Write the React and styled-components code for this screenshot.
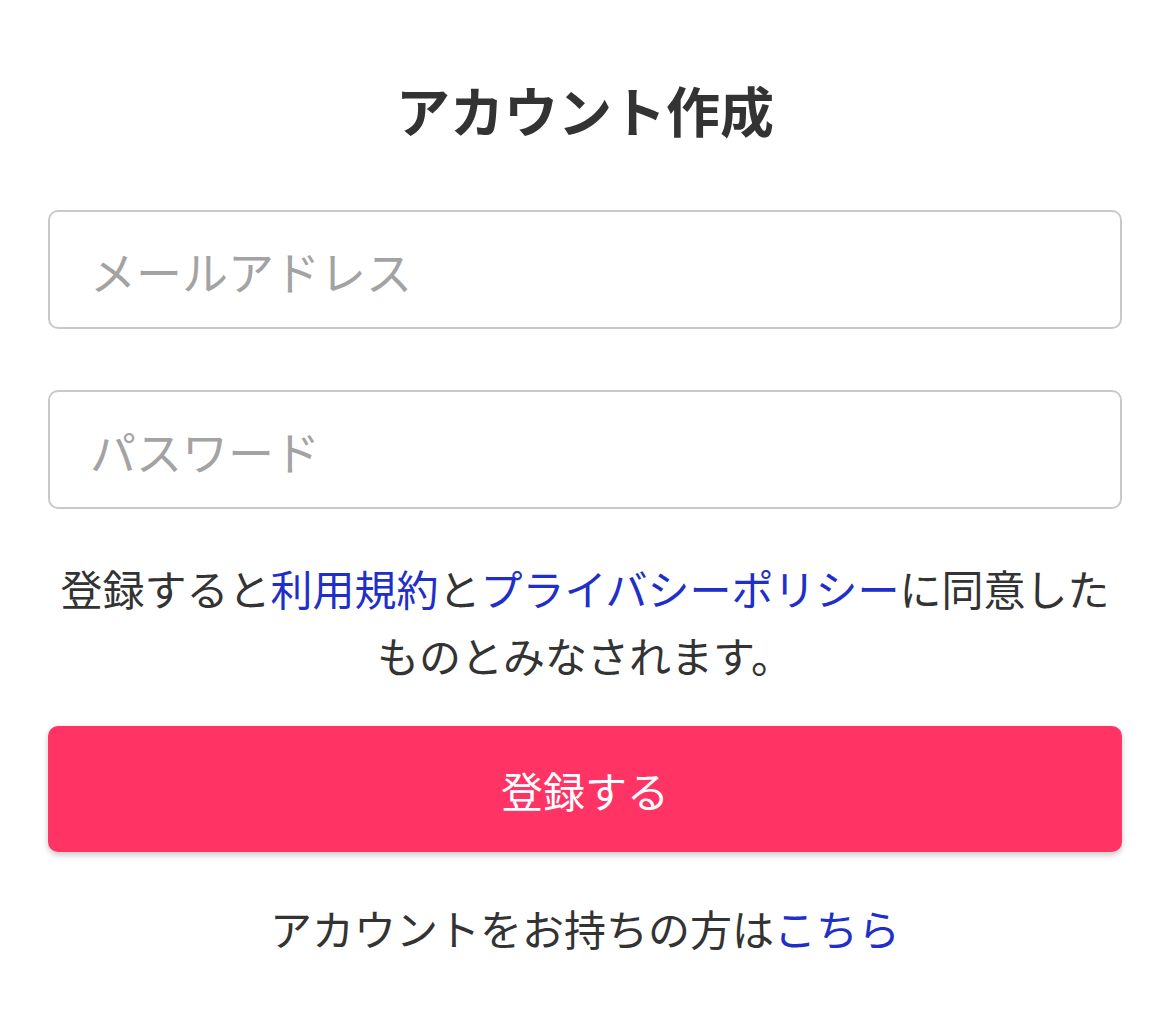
import React from "react";
import styled, { createGlobalStyle } from "styled-components";

const GlobalStyle = createGlobalStyle`
  body {
    margin: 0;
    background: #ffffff;
    font-family: "Noto Sans CJK JP", "Noto Sans", sans-serif;
    color: #333333;
  }
`;

const Page = styled.div`
  display: flex;
  flex-direction: column;
  padding: 72px 48px 0;
`;

const Title = styled.h1`
  margin: 0 0 62px;
  font-size: 54px;
  line-height: 76px;
  font-weight: 700;
  text-align: center;
  color: #333333;
`;

const Field = styled.input`
  box-sizing: border-box;
  width: 100%;
  height: 119px;
  margin: 0 0 ${(p) => p.$gap}px;
  padding: 0 40px;
  border: 2px solid #c9c9c9;
  border-radius: 10px;
  font-family: inherit;
  font-size: 46px;
  color: #333333;
  outline: none;

  &::placeholder {
    color: #a3a3a3;
  }
`;

const Note = styled.p`
  margin: 0 0 38px;
  font-size: 42px;
  line-height: 67px;
  text-align: center;
  color: #333333;
`;

const TextLink = styled.a`
  color: #1f2fc8;
  text-decoration: none;
`;

const SubmitButton = styled.button`
  height: 126px;
  border: none;
  border-radius: 10px;
  background: #ff3364;
  box-shadow: 0 3px 6px rgba(0, 0, 0, 0.22);
  color: #ffffff;
  font-family: inherit;
  font-size: 42px;
  cursor: pointer;
`;

const Footer = styled.p`
  margin: 46px 0 0;
  font-size: 42px;
  line-height: 60px;
  text-align: center;
  color: #333333;
`;

export default function App() {
  return (
    <>
      <GlobalStyle />
      <Page>
        <Title>アカウント作成</Title>
        <Field type="email" placeholder="メールアドレス" $gap={61} />
        <Field type="password" placeholder="パスワード" $gap={45} />
        <Note>
          登録すると<TextLink href="#">利用規約</TextLink>と
          <TextLink href="#">プライバシーポリシー</TextLink>
          に同意したものとみなされます。
        </Note>
        <SubmitButton>登録する</SubmitButton>
        <Footer>
          アカウントをお持ちの方は<TextLink href="#">こちら</TextLink>
        </Footer>
      </Page>
    </>
  );
}
